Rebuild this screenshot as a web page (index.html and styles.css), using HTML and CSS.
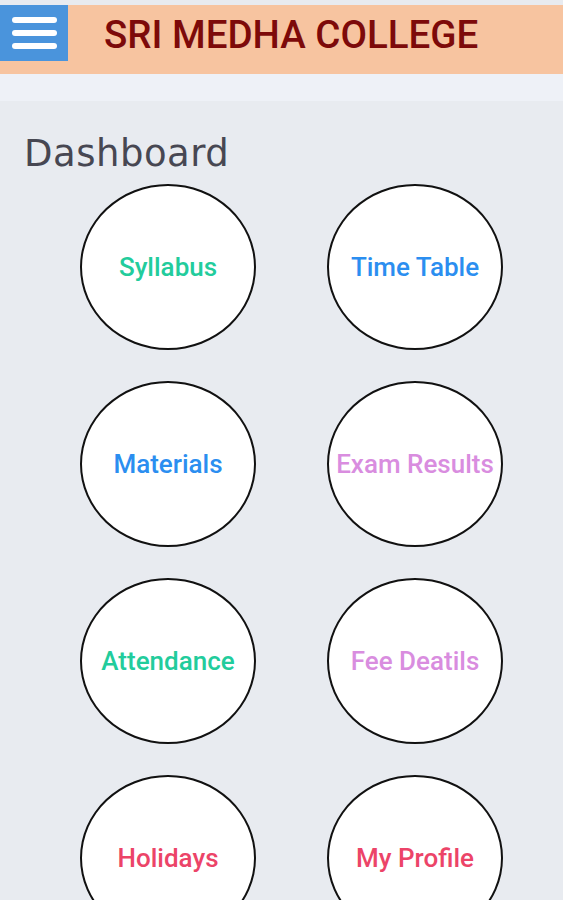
FILE: index.html
```html
<!DOCTYPE html>
<html>
<head>
<title>Sri Medha College</title>
<link rel="stylesheet" href="styles.css">
</head>
<body>
<div id="header">
	<div class="menu">
		<span></span>
		<span></span>
		<span></span>
	</div>
	<h1>SRI MEDHA COLLEGE</h1>
</div>
<div id="strip"></div>

<div id="main">
	<h2>Dashboard</h2>
	<div id="grid">
		<div class="tile teal">Syllabus</div>
		<div class="tile blue">Time Table</div>
		<div class="tile blue">Materials</div>
		<div class="tile pink">Exam Results</div>
		<div class="tile teal">Attendance</div>
		<div class="tile pink">Fee Deatils</div>
		<div class="tile red">Holidays</div>
		<div class="tile red">My Profile</div>
	</div>
</div>
</body>
</html>
```

FILE: styles.css
```css
body {
	margin: 0;
	background-color: #e8ebf0;
	font-family: Roboto, "Liberation Sans", sans-serif;
	height: 900px;
	overflow: hidden;
}

#header {
	margin-top: 5px;
	height: 69px;
	background-color: #f7c4a0;
	display: flex;
	align-items: flex-start;
}
.menu {
	width: 68px;
	height: 56px;
	background-color: #4a94dc;
	display: flex;
	flex-direction: column;
	justify-content: center;
	gap: 7px;
	padding-left: 12px;
	box-sizing: border-box;
}
.menu span {
	display: block;
	width: 45px;
	height: 6px;
	border-radius: 3px;
	background-color: white;
}
#header h1 {
	margin: 0 0 0 36px;
	line-height: 60px;
	font-size: 38.5px;
	font-weight: 500;
	color: #7d0a0a;
}

#strip {
	height: 27px;
	background-color: #eef1f7;
}

#main h2 {
	margin: 29px 0 6px 24px;
	font-family: "DejaVu Sans", sans-serif;
	font-weight: 400;
	font-size: 37px;
	letter-spacing: 0.5px;
	line-height: 48px;
	color: #474752;
}

#grid {
	display: grid;
	grid-template-columns: 176px 176px;
	column-gap: 71px;
	row-gap: 31px;
	padding-left: 80px;
}
.tile {
	height: 166px;
	border: 2px solid #111;
	border-radius: 50%;
	background-color: white;
	box-sizing: border-box;
	display: flex;
	align-items: center;
	justify-content: center;
	font-size: 26px;
	font-weight: 500;
	white-space: nowrap;
}
.teal {color: #22cc9c;}
.blue {color: #2b8ef0;}
.pink {color: #d98ddf;}
.red {color: #ec4468;}
```
